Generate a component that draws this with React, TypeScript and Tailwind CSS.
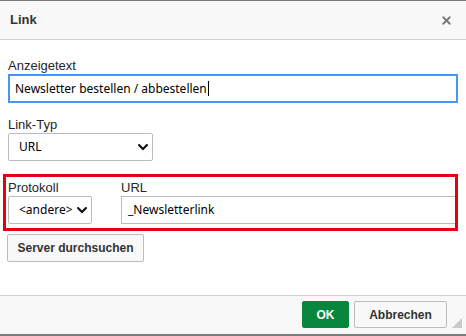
import { X } from "lucide-react";

const labelCls = "block text-[13px] leading-[17px] text-[#262626]";
const fieldFont = { fontFamily: '"Noto Sans", "Open Sans", sans-serif' };

function Chevron() {
  return (
    <svg width="10" height="7" viewBox="0 0 10 7" className="shrink-0">
      <path d="M1.2 1.2 L5 5 L8.8 1.2" fill="none" stroke="#111" strokeWidth="2.2" strokeLinecap="square" />
    </svg>
  );
}

function FakeSelect({ value, width }: { value: string; width: string }) {
  return (
    <div
      className={`${width} h-[28px] flex items-center justify-between pl-[10px] pr-[4px] bg-white border border-[#bcbcbc] rounded-[2px] text-[12px] text-black`}
      style={fieldFont}
    >
      <span>{value}</span>
      <Chevron />
    </div>
  );
}

export default function App() {
  return (
    <div
      className="w-[466px] h-[336px] flex flex-col bg-white overflow-hidden relative"
      style={{ fontFamily: '"Liberation Sans", Arial, sans-serif' }}
    >
      <div className="h-px bg-[#7a7a7a]" />

      {/* title bar */}
      <div className="h-[39px] flex items-center justify-between pl-[10px] pr-[13px] bg-[#f8f8f8] border-b border-[#d1d1d1]">
        <span className="text-[13px] font-bold text-[#333]">Link</span>
        <X className="w-[13px] h-[13px] text-[#777]" strokeWidth={3.4} />
      </div>

      {/* body */}
      <div className="flex-1 px-[8px] pt-[17px]">
        <label className={labelCls}>Anzeigetext</label>
        <div
          className="h-[29px] flex items-center pl-[5px] border-2 border-[#4597f3] text-[12px] text-black"
          style={fieldFont}
        >
          <span>Newsletter bestellen / abbestellen</span>
          <span className="w-px h-[15px] bg-black ml-px" />
        </div>

        <label className={`${labelCls} mt-[13px]`}>Link-Typ</label>
        <FakeSelect value="URL" width="w-[145px]" />

        <div className="mt-[13px] ml-[-5px] border-[3px] border-[#e4000f] pl-[2px] pt-[2px] pb-[4px] flex gap-[29px]">
          <div>
            <label className={labelCls}>Protokoll</label>
            <FakeSelect value="<andere>" width="w-[84px]" />
          </div>
          <div className="flex-1">
            <label className={labelCls}>URL</label>
            <div
              className="h-[28px] flex items-center pl-[6px] border border-r-0 border-[#bcbcbc] text-[12px] text-black"
              style={fieldFont}
            >
              _Newsletterlink
            </div>
          </div>
        </div>

        <button className="mt-[3px] ml-[-1px] h-[28px] w-[137px] bg-[#f8f8f8] border border-[#bcbcbc] rounded-[2px] text-[12px] font-bold text-[#333]">
          Server durchsuchen
        </button>
      </div>

      {/* footer */}
      <div className="h-[39px] flex justify-end gap-[5px] pt-[5px] pr-[19px] bg-[#f8f8f8] border-t border-[#d1d1d1] relative">
        <button className="w-[47px] h-[27px] bg-[#09863e] border border-[#09863e] rounded-[2px] text-[12px] font-bold text-white">
          OK
        </button>
        <button className="w-[93px] h-[27px] bg-[#f8f8f8] border border-[#bcbcbc] rounded-[2px] text-[12px] font-bold text-[#333]">
          Abbrechen
        </button>
        <svg width="10" height="10" viewBox="0 0 10 10" className="absolute right-[4px] bottom-[6px]">
          <path d="M10 0 L10 10 L0 10 Z" fill="#c9c9c9" />
        </svg>
      </div>

      <div className="h-[2px] bg-[#7a7a7a]" />
    </div>
  );
}
